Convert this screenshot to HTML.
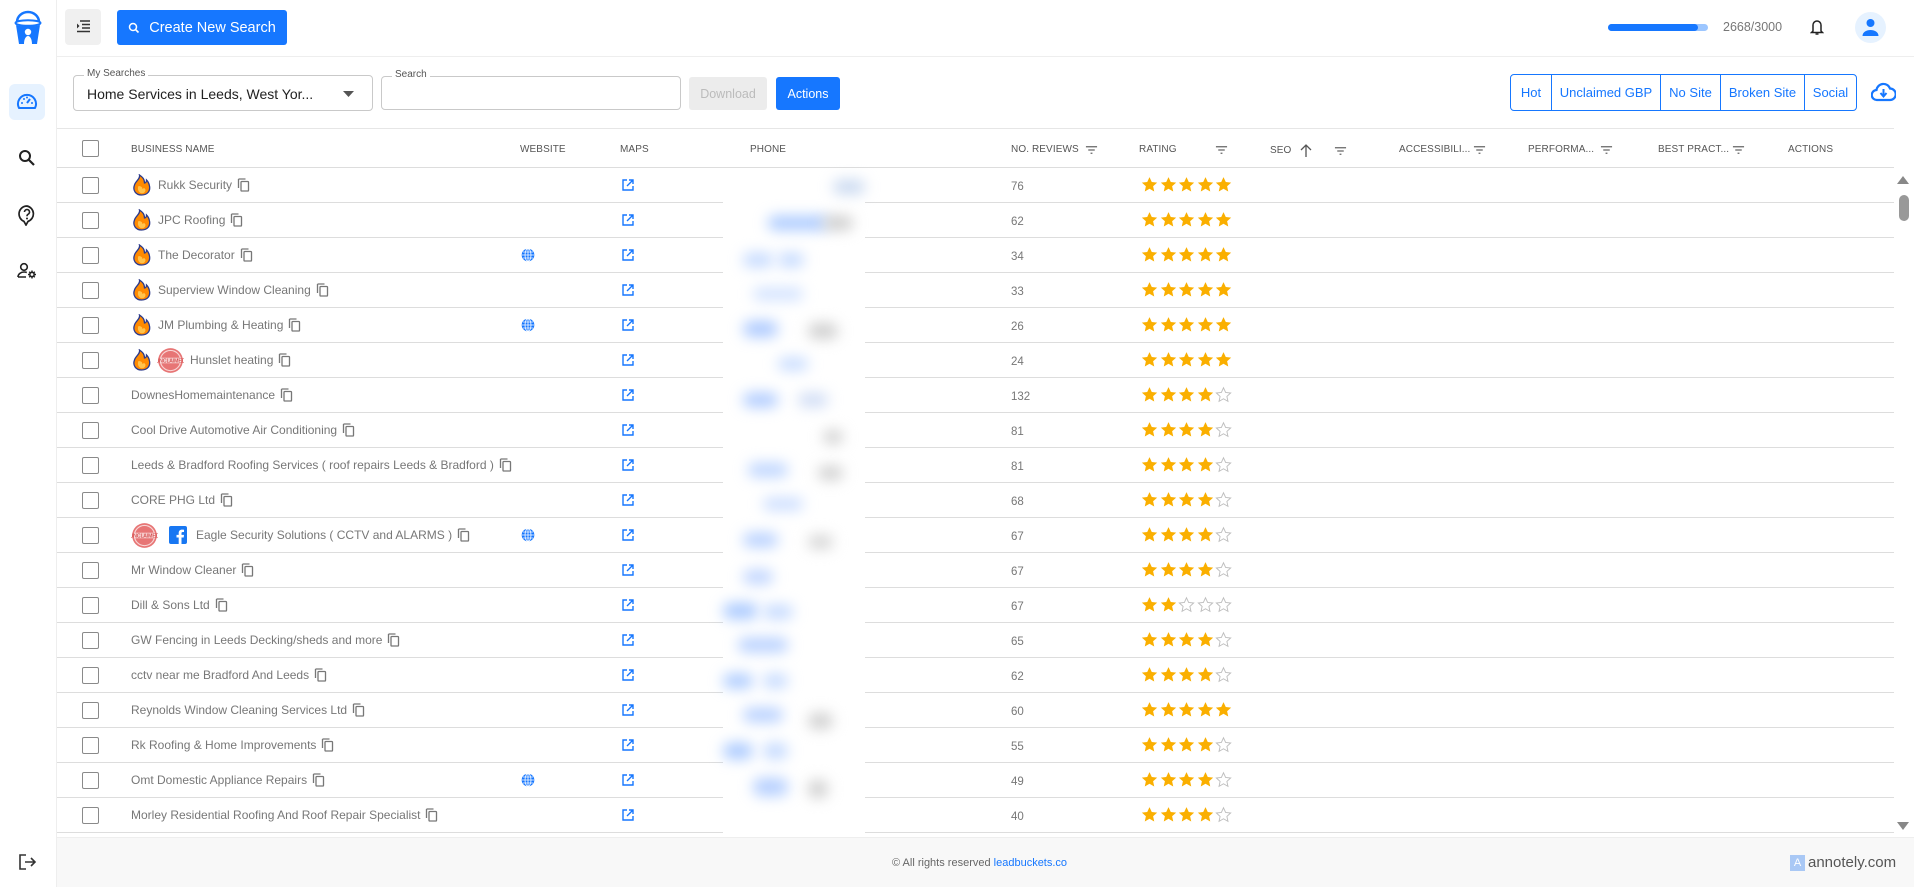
<!DOCTYPE html>
<html><head><meta charset="utf-8">
<style>
*{box-sizing:border-box;margin:0;padding:0}
body{width:1914px;height:887px;overflow:hidden;background:#fff;font-family:"Liberation Sans",sans-serif;position:relative;color:#555}
.abs{position:absolute}
.side{left:0;top:0;width:57px;height:887px;border-right:1px solid #eee;background:#fff}
.top{left:57px;top:0;right:0;height:57px;border-bottom:1px solid #eee}
.btn{background:#1677ff;color:#fff;border-radius:3px;font-size:14px;display:flex;align-items:center;justify-content:center}
.field{border:1px solid #c9c9c9;border-radius:4px;background:#fff}
.lbl{position:absolute;top:-8px;left:10px;background:#fff;padding:0 3px;font-size:10px;color:#555}
.seg{left:1510px;top:74px;width:347px;height:37px;border:1px solid #1677ff;border-radius:4px;display:flex;color:#1677ff;font-size:13px}
.seg div{display:flex;align-items:center;justify-content:center;border-right:1px solid #1677ff;height:100%}
.seg div:last-child{border:none}
.hdr{top:128px;left:57px;width:1837px;height:40px;border-top:1px solid #e6e6e6;border-bottom:1px solid #ddd}
.h{position:absolute;top:15px;font-size:10px;color:#555;text-transform:uppercase;letter-spacing:.1px;display:flex;align-items:center}
.cb{position:absolute;width:17px;height:17px;border:1.8px solid #8a8a8a;border-radius:2px;background:#fff}
.row{position:absolute;left:57px;width:1837px;height:35px;border-bottom:1px solid #ddd}
.row .cb{left:25px;top:9px}
.nm{position:absolute;left:74px;top:0;height:34px;display:flex;align-items:center;font-size:12px;color:#777;white-space:nowrap}
.nm svg{flex:none}
.num{position:absolute;left:954px;top:13px;font-size:11.5px;color:#777}
.st{position:absolute;left:1084px;top:8px;display:flex;gap:1.5px}
.mp{position:absolute;left:565px;top:11px}
.gl{position:absolute;left:464px;top:10px}
.phone{left:723px;top:168px;width:142px;height:669px;background:#fff}
.blob{position:absolute;border-radius:8px;filter:blur(7px)}
</style></head><body>
<svg width="0" height="0" style="position:absolute">
<defs>
<symbol id="fire" viewBox="0 0 20 22"><path d="M8 1C9 5 4 7 3 11c-2 5 1 10 7 10s9-4 8-9c-.5-3-2-5-3-6 0 2-1 3-2 3 0-4-2-6-5-8z" fill="#ff8a00" stroke="#2b3a8c" stroke-width="1.3"/><path d="M7 12c-1 2-1 5 2 7 3 1 5-1 5-3 0-1-1-2-2-2 0 1-1 1-1 1 0-2-2-3-4-3z" fill="#ffc34d"/></symbol>
<symbol id="copy" viewBox="0 0 14 14"><path d="M1.5 1v9M1.5 1h7" stroke="#777" stroke-width="1.3" fill="none"/><rect x="4" y="3.5" width="7.5" height="9.5" rx=".8" stroke="#777" stroke-width="1.3" fill="none"/></symbol>
<symbol id="ext" viewBox="0 0 12 12"><path d="M5 1H1v10h10V7" stroke="#1677ff" stroke-width="1.4" fill="none"/><path d="M7 1h4v4M11 1L5 7" stroke="#1677ff" stroke-width="1.4" fill="none"/></symbol>
<symbol id="globe" viewBox="0 0 14 14"><circle cx="7" cy="7" r="6.3" fill="#1677ff"/><path d="M1 7h12M7 1v12M2 4h10M2 10h10" stroke="#fff" stroke-width=".8"/><ellipse cx="7" cy="7" rx="3" ry="6.3" stroke="#fff" stroke-width=".8" fill="none"/></symbol>
<symbol id="sf" viewBox="0 0 24 24"><path d="M12 1.5l3.2 7 7.6.8-5.7 5.1 1.6 7.5L12 18l-6.7 3.9 1.6-7.5L1.2 9.3l7.6-.8z" fill="#faaf00"/></symbol>
<symbol id="se" viewBox="0 0 24 24"><path d="M12 2.5l3 6.6 7.1.8-5.3 4.8 1.5 7L12 18l-6.3 3.7 1.5-7L1.9 9.9 9 9.1z" fill="none" stroke="#bdbdbd" stroke-width="1.3"/></symbol>
<symbol id="flt" viewBox="0 0 14 10"><path d="M1 1.5h12M3.5 5h7M6 8.5h2" stroke="#666" stroke-width="1.4"/></symbol>
<symbol id="unc" viewBox="0 0 24 24"><circle cx="12" cy="12" r="11" fill="#e35d5d" opacity=".85"/><circle cx="12" cy="12" r="9" fill="none" stroke="#fff" stroke-width="1" opacity=".7"/><rect x="3" y="9.5" width="18" height="5" fill="#fff" opacity=".6"/><text x="12" y="13.6" font-size="4.5" text-anchor="middle" fill="#c33" font-family="Liberation Sans">UNCLAIMED</text></symbol>
<symbol id="fb" viewBox="0 0 18 18"><rect width="18" height="18" rx="2" fill="#1877f2"/><path d="M12.5 18v-6.5h2.2l.3-2.6h-2.5V7.3c0-.8.2-1.3 1.3-1.3H15V3.7c-.3 0-1.1-.1-2-.1-2 0-3.3 1.2-3.3 3.4v1.9H7.5v2.6h2.2V18z" fill="#fff"/></symbol>
</defs></svg>

<div class="abs side">
<svg class="abs" style="left:13px;top:10px" width="30" height="35" viewBox="0 0 30 35"><path d="M4 12a11 10 0 0 1 22 0" stroke="#1677ff" stroke-width="2.5" fill="none"/><ellipse cx="15" cy="13" rx="12.5" ry="2.8" stroke="#1677ff" stroke-width="2" fill="none"/><path d="M3 15l3 19h5c0-5 2-8 4-8s4 3 4 8h5l3-19c-4 2-20 2-24 0z" fill="#1677ff"/><circle cx="15" cy="22" r="3.2" fill="#fff"/></svg>
<div class="abs" style="left:9px;top:84px;width:36px;height:36px;background:#e6f2ff;border-radius:6px"></div>
<svg class="abs" style="left:16px;top:91px" width="22" height="22" viewBox="0 0 22 22"><path d="M3 17a9 9 0 1 1 16 0z" stroke="#1677ff" stroke-width="2" fill="none" stroke-linejoin="round"/><path d="M11 12l3-4" stroke="#1677ff" stroke-width="2"/><circle cx="6" cy="12" r="1" fill="#1677ff"/><circle cx="8" cy="8" r="1" fill="#1677ff"/><circle cx="11" cy="6.5" r="1" fill="#1677ff"/><circle cx="16" cy="12" r="1" fill="#1677ff"/></svg>
<svg class="abs" style="left:18px;top:149px" width="18" height="18" viewBox="0 0 18 18"><circle cx="7" cy="7" r="5" stroke="#222" stroke-width="2" fill="none"/><path d="M11 11l5 5" stroke="#222" stroke-width="2.2"/></svg>
<svg class="abs" style="left:17px;top:204px" width="20" height="22" viewBox="0 0 20 22"><path d="M10 2a8 8 0 0 0-3 15.4L9 21l2-3.6A8 8 0 0 0 10 2z" stroke="#222" stroke-width="1.7" fill="none"/><path d="M7.5 8a2.5 2.5 0 1 1 3.5 2.3c-1 .5-1 1-1 2" stroke="#222" stroke-width="1.6" fill="none"/><circle cx="10" cy="14.5" r="1" fill="#222"/></svg>
<svg class="abs" style="left:17px;top:262px" width="20" height="18" viewBox="0 0 20 18"><circle cx="7" cy="5" r="3.3" stroke="#222" stroke-width="1.6" fill="none"/><path d="M1 15c0-3 3-5 6-5 1 0 2 .2 2.8.5M1 15h8" stroke="#222" stroke-width="1.6" fill="none"/><circle cx="15" cy="12.5" r="2.2" stroke="#222" stroke-width="1.6" fill="none"/><path d="M15 8.5v1.5M15 15v1.5M11 12.5h1.5M17.5 12.5H19M12.2 9.7l1 1M16.8 14.3l1 1M12.2 15.3l1-1M16.8 10.7l1-1" stroke="#222" stroke-width="1.4"/></svg>
<svg class="abs" style="left:19px;top:854px" width="18" height="16" viewBox="0 0 18 16"><path d="M7 1H1v14h6" stroke="#333" stroke-width="1.6" fill="none"/><path d="M6 8h10M12 4l4 4-4 4" stroke="#333" stroke-width="1.6" fill="none"/></svg>
</div>

<div class="abs top"></div>
<div class="abs" style="left:65px;top:9px;width:36px;height:36px;background:#f0f0f0;border-radius:4px"></div>
<svg class="abs" style="left:76px;top:20px" width="14" height="13" viewBox="0 0 14 13"><path d="M4 1h10M6 4.5h8M6 8h8M1 11.5h13" stroke="#333" stroke-width="1.5"/><path d="M1 3.5l2.5 2.5L1 8.5z" fill="#333"/></svg>
<div class="abs btn" style="left:117px;top:10px;width:170px;height:35px;font-size:14.5px"><svg width="12" height="12" viewBox="0 0 12 12" style="margin-right:9px"><circle cx="5" cy="5" r="3.5" stroke="#fff" stroke-width="1.5" fill="none"/><path d="M7.5 7.5l3 3" stroke="#fff" stroke-width="1.6"/></svg>Create New Search</div>
<div class="abs" style="left:1608px;top:24px;width:100px;height:7px;background:#9cc6ff;border-radius:4px"><div style="width:90px;height:7px;background:#1677ff;border-radius:4px"></div></div>
<div class="abs" style="left:1723px;top:20px;font-size:12.5px;color:#777">2668/3000</div>
<svg class="abs" style="left:1810px;top:18px" width="14" height="18" viewBox="0 0 14 18"><path d="M3 13V7a4 4 0 0 1 8 0v6l1.5 1.5h-11z" stroke="#222" stroke-width="1.5" fill="none"/><path d="M5.5 16h3" stroke="#222" stroke-width="1.5"/></svg>
<div class="abs" style="left:1855px;top:12px;width:31px;height:31px;border-radius:50%;background:#e6f2ff"></div>
<svg class="abs" style="left:1862px;top:18px" width="17" height="18" viewBox="0 0 17 18"><circle cx="8.5" cy="5" r="4" fill="#1677ff"/><path d="M0.5 18c0-4 4-6 8-6s8 2 8 6z" fill="#1677ff"/></svg>

<div class="abs field" style="left:73px;top:75px;width:300px;height:36px"><span class="lbl">My Searches</span><span class="abs" style="left:13px;top:10px;font-size:14px;color:#222">Home Services in Leeds, West Yor...</span><svg class="abs" style="left:269px;top:15px" width="11" height="6"><path d="M0 0h11L5.5 6z" fill="#555"/></svg></div>
<div class="abs field" style="left:381px;top:76px;width:300px;height:34px"><span class="lbl">Search</span></div>
<div class="abs btn" style="left:689px;top:77px;width:78px;height:33px;background:#ececec;color:#bbb;font-size:12.5px">Download</div>
<div class="abs btn" style="left:776px;top:77px;width:64px;height:33px;font-size:12.5px">Actions</div>
<div class="abs seg"><div style="width:41px">Hot</div><div style="width:109px">Unclaimed GBP</div><div style="width:60px">No Site</div><div style="width:84px">Broken Site</div><div style="flex:1">Social</div></div>
<svg class="abs" style="left:1871px;top:82px" width="25" height="20" viewBox="0 0 25 20"><path d="M6 18a5 5 0 0 1-.5-10A7 7 0 0 1 19 6.5 5.5 5.5 0 0 1 19 18z" stroke="#1677ff" stroke-width="2.2" fill="none"/><path d="M12.5 7v7M9.5 11l3 3.5 3-3.5" stroke="#1677ff" stroke-width="2" fill="none"/></svg>

<div class="abs hdr">
<div class="cb" style="left:25px;top:11px"></div>
<div class="h" style="left:74px">Business Name</div>
<div class="h" style="left:463px">Website</div>
<div class="h" style="left:563px">Maps</div>
<div class="h" style="left:693px">Phone</div>
<div class="h" style="left:954px">No. Reviews<svg width="13" height="10" style="margin-left:6px"><use href="#flt"/></svg></div>
<div class="h" style="left:1082px">Rating<svg width="13" height="10" style="margin-left:38px"><use href="#flt"/></svg></div>
<div class="h" style="left:1213px">SEO<svg width="12" height="13" viewBox="0 0 12 13" style="margin-left:9px"><path d="M6 13V1M1 6l5-5 5 5" stroke="#555" stroke-width="1.3" fill="none"/></svg><svg width="13" height="10" style="margin-left:22px"><use href="#flt"/></svg></div>
<div class="h" style="left:1342px">Accessibili...<svg width="13" height="10" style="margin-left:3px"><use href="#flt"/></svg></div>
<div class="h" style="left:1471px">Performa...<svg width="13" height="10" style="margin-left:6px"><use href="#flt"/></svg></div>
<div class="h" style="left:1601px">Best Pract...<svg width="13" height="10" style="margin-left:3px"><use href="#flt"/></svg></div>
<div class="h" style="left:1731px">Actions</div>
</div>

<div class="row" style="top:168px"><div class="cb"></div><div class="nm"><svg width="21" height="22"><use href="#fire"/></svg><span style="margin-left:6px">Rukk Security</span><svg width="14" height="14" style="margin-left:5px"><use href="#copy"/></svg></div><svg class="mp" width="12" height="12"><use href="#ext"/></svg><div class="num">76</div><div class="st"><svg width="17" height="17"><use href="#sf"/></svg><svg width="17" height="17"><use href="#sf"/></svg><svg width="17" height="17"><use href="#sf"/></svg><svg width="17" height="17"><use href="#sf"/></svg><svg width="17" height="17"><use href="#sf"/></svg></div></div>
<div class="row" style="top:203px"><div class="cb"></div><div class="nm"><svg width="21" height="22"><use href="#fire"/></svg><span style="margin-left:6px">JPC Roofing</span><svg width="14" height="14" style="margin-left:5px"><use href="#copy"/></svg></div><svg class="mp" width="12" height="12"><use href="#ext"/></svg><div class="num">62</div><div class="st"><svg width="17" height="17"><use href="#sf"/></svg><svg width="17" height="17"><use href="#sf"/></svg><svg width="17" height="17"><use href="#sf"/></svg><svg width="17" height="17"><use href="#sf"/></svg><svg width="17" height="17"><use href="#sf"/></svg></div></div>
<div class="row" style="top:238px"><div class="cb"></div><div class="nm"><svg width="21" height="22"><use href="#fire"/></svg><span style="margin-left:6px">The Decorator</span><svg width="14" height="14" style="margin-left:5px"><use href="#copy"/></svg></div><svg class="gl" width="14" height="14"><use href="#globe"/></svg><svg class="mp" width="12" height="12"><use href="#ext"/></svg><div class="num">34</div><div class="st"><svg width="17" height="17"><use href="#sf"/></svg><svg width="17" height="17"><use href="#sf"/></svg><svg width="17" height="17"><use href="#sf"/></svg><svg width="17" height="17"><use href="#sf"/></svg><svg width="17" height="17"><use href="#sf"/></svg></div></div>
<div class="row" style="top:273px"><div class="cb"></div><div class="nm"><svg width="21" height="22"><use href="#fire"/></svg><span style="margin-left:6px">Superview Window Cleaning</span><svg width="14" height="14" style="margin-left:5px"><use href="#copy"/></svg></div><svg class="mp" width="12" height="12"><use href="#ext"/></svg><div class="num">33</div><div class="st"><svg width="17" height="17"><use href="#sf"/></svg><svg width="17" height="17"><use href="#sf"/></svg><svg width="17" height="17"><use href="#sf"/></svg><svg width="17" height="17"><use href="#sf"/></svg><svg width="17" height="17"><use href="#sf"/></svg></div></div>
<div class="row" style="top:308px"><div class="cb"></div><div class="nm"><svg width="21" height="22"><use href="#fire"/></svg><span style="margin-left:6px">JM Plumbing &amp; Heating</span><svg width="14" height="14" style="margin-left:5px"><use href="#copy"/></svg></div><svg class="gl" width="14" height="14"><use href="#globe"/></svg><svg class="mp" width="12" height="12"><use href="#ext"/></svg><div class="num">26</div><div class="st"><svg width="17" height="17"><use href="#sf"/></svg><svg width="17" height="17"><use href="#sf"/></svg><svg width="17" height="17"><use href="#sf"/></svg><svg width="17" height="17"><use href="#sf"/></svg><svg width="17" height="17"><use href="#sf"/></svg></div></div>
<div class="row" style="top:343px"><div class="cb"></div><div class="nm"><svg width="21" height="22"><use href="#fire"/></svg><svg width="27" height="27" style="margin-left:5px"><use href="#unc"/></svg><span style="margin-left:6px">Hunslet heating</span><svg width="14" height="14" style="margin-left:5px"><use href="#copy"/></svg></div><svg class="mp" width="12" height="12"><use href="#ext"/></svg><div class="num">24</div><div class="st"><svg width="17" height="17"><use href="#sf"/></svg><svg width="17" height="17"><use href="#sf"/></svg><svg width="17" height="17"><use href="#sf"/></svg><svg width="17" height="17"><use href="#sf"/></svg><svg width="17" height="17"><use href="#sf"/></svg></div></div>
<div class="row" style="top:378px"><div class="cb"></div><div class="nm"><span>DownesHomemaintenance</span><svg width="14" height="14" style="margin-left:5px"><use href="#copy"/></svg></div><svg class="mp" width="12" height="12"><use href="#ext"/></svg><div class="num">132</div><div class="st"><svg width="17" height="17"><use href="#sf"/></svg><svg width="17" height="17"><use href="#sf"/></svg><svg width="17" height="17"><use href="#sf"/></svg><svg width="17" height="17"><use href="#sf"/></svg><svg width="17" height="17"><use href="#se"/></svg></div></div>
<div class="row" style="top:413px"><div class="cb"></div><div class="nm"><span>Cool Drive Automotive Air Conditioning</span><svg width="14" height="14" style="margin-left:5px"><use href="#copy"/></svg></div><svg class="mp" width="12" height="12"><use href="#ext"/></svg><div class="num">81</div><div class="st"><svg width="17" height="17"><use href="#sf"/></svg><svg width="17" height="17"><use href="#sf"/></svg><svg width="17" height="17"><use href="#sf"/></svg><svg width="17" height="17"><use href="#sf"/></svg><svg width="17" height="17"><use href="#se"/></svg></div></div>
<div class="row" style="top:448px"><div class="cb"></div><div class="nm"><span>Leeds &amp; Bradford Roofing Services ( roof repairs Leeds &amp; Bradford )</span><svg width="14" height="14" style="margin-left:5px"><use href="#copy"/></svg></div><svg class="mp" width="12" height="12"><use href="#ext"/></svg><div class="num">81</div><div class="st"><svg width="17" height="17"><use href="#sf"/></svg><svg width="17" height="17"><use href="#sf"/></svg><svg width="17" height="17"><use href="#sf"/></svg><svg width="17" height="17"><use href="#sf"/></svg><svg width="17" height="17"><use href="#se"/></svg></div></div>
<div class="row" style="top:483px"><div class="cb"></div><div class="nm"><span>CORE PHG Ltd</span><svg width="14" height="14" style="margin-left:5px"><use href="#copy"/></svg></div><svg class="mp" width="12" height="12"><use href="#ext"/></svg><div class="num">68</div><div class="st"><svg width="17" height="17"><use href="#sf"/></svg><svg width="17" height="17"><use href="#sf"/></svg><svg width="17" height="17"><use href="#sf"/></svg><svg width="17" height="17"><use href="#sf"/></svg><svg width="17" height="17"><use href="#se"/></svg></div></div>
<div class="row" style="top:518px"><div class="cb"></div><div class="nm"><svg width="27" height="27"><use href="#unc"/></svg><svg width="18" height="18" style="margin-left:11px"><use href="#fb"/></svg><span style="margin-left:9px">Eagle Security Solutions ( CCTV and ALARMS )</span><svg width="14" height="14" style="margin-left:5px"><use href="#copy"/></svg></div><svg class="gl" width="14" height="14"><use href="#globe"/></svg><svg class="mp" width="12" height="12"><use href="#ext"/></svg><div class="num">67</div><div class="st"><svg width="17" height="17"><use href="#sf"/></svg><svg width="17" height="17"><use href="#sf"/></svg><svg width="17" height="17"><use href="#sf"/></svg><svg width="17" height="17"><use href="#sf"/></svg><svg width="17" height="17"><use href="#se"/></svg></div></div>
<div class="row" style="top:553px"><div class="cb"></div><div class="nm"><span>Mr Window Cleaner</span><svg width="14" height="14" style="margin-left:5px"><use href="#copy"/></svg></div><svg class="mp" width="12" height="12"><use href="#ext"/></svg><div class="num">67</div><div class="st"><svg width="17" height="17"><use href="#sf"/></svg><svg width="17" height="17"><use href="#sf"/></svg><svg width="17" height="17"><use href="#sf"/></svg><svg width="17" height="17"><use href="#sf"/></svg><svg width="17" height="17"><use href="#se"/></svg></div></div>
<div class="row" style="top:588px"><div class="cb"></div><div class="nm"><span>Dill &amp; Sons Ltd</span><svg width="14" height="14" style="margin-left:5px"><use href="#copy"/></svg></div><svg class="mp" width="12" height="12"><use href="#ext"/></svg><div class="num">67</div><div class="st"><svg width="17" height="17"><use href="#sf"/></svg><svg width="17" height="17"><use href="#sf"/></svg><svg width="17" height="17"><use href="#se"/></svg><svg width="17" height="17"><use href="#se"/></svg><svg width="17" height="17"><use href="#se"/></svg></div></div>
<div class="row" style="top:623px"><div class="cb"></div><div class="nm"><span>GW Fencing in Leeds Decking/sheds and more</span><svg width="14" height="14" style="margin-left:5px"><use href="#copy"/></svg></div><svg class="mp" width="12" height="12"><use href="#ext"/></svg><div class="num">65</div><div class="st"><svg width="17" height="17"><use href="#sf"/></svg><svg width="17" height="17"><use href="#sf"/></svg><svg width="17" height="17"><use href="#sf"/></svg><svg width="17" height="17"><use href="#sf"/></svg><svg width="17" height="17"><use href="#se"/></svg></div></div>
<div class="row" style="top:658px"><div class="cb"></div><div class="nm"><span>cctv near me Bradford And Leeds</span><svg width="14" height="14" style="margin-left:5px"><use href="#copy"/></svg></div><svg class="mp" width="12" height="12"><use href="#ext"/></svg><div class="num">62</div><div class="st"><svg width="17" height="17"><use href="#sf"/></svg><svg width="17" height="17"><use href="#sf"/></svg><svg width="17" height="17"><use href="#sf"/></svg><svg width="17" height="17"><use href="#sf"/></svg><svg width="17" height="17"><use href="#se"/></svg></div></div>
<div class="row" style="top:693px"><div class="cb"></div><div class="nm"><span>Reynolds Window Cleaning Services Ltd</span><svg width="14" height="14" style="margin-left:5px"><use href="#copy"/></svg></div><svg class="mp" width="12" height="12"><use href="#ext"/></svg><div class="num">60</div><div class="st"><svg width="17" height="17"><use href="#sf"/></svg><svg width="17" height="17"><use href="#sf"/></svg><svg width="17" height="17"><use href="#sf"/></svg><svg width="17" height="17"><use href="#sf"/></svg><svg width="17" height="17"><use href="#sf"/></svg></div></div>
<div class="row" style="top:728px"><div class="cb"></div><div class="nm"><span>Rk Roofing &amp; Home Improvements</span><svg width="14" height="14" style="margin-left:5px"><use href="#copy"/></svg></div><svg class="mp" width="12" height="12"><use href="#ext"/></svg><div class="num">55</div><div class="st"><svg width="17" height="17"><use href="#sf"/></svg><svg width="17" height="17"><use href="#sf"/></svg><svg width="17" height="17"><use href="#sf"/></svg><svg width="17" height="17"><use href="#sf"/></svg><svg width="17" height="17"><use href="#se"/></svg></div></div>
<div class="row" style="top:763px"><div class="cb"></div><div class="nm"><span>Omt Domestic Appliance Repairs</span><svg width="14" height="14" style="margin-left:5px"><use href="#copy"/></svg></div><svg class="gl" width="14" height="14"><use href="#globe"/></svg><svg class="mp" width="12" height="12"><use href="#ext"/></svg><div class="num">49</div><div class="st"><svg width="17" height="17"><use href="#sf"/></svg><svg width="17" height="17"><use href="#sf"/></svg><svg width="17" height="17"><use href="#sf"/></svg><svg width="17" height="17"><use href="#sf"/></svg><svg width="17" height="17"><use href="#se"/></svg></div></div>
<div class="row" style="top:798px"><div class="cb"></div><div class="nm"><span>Morley Residential Roofing And Roof Repair Specialist</span><svg width="14" height="14" style="margin-left:5px"><use href="#copy"/></svg></div><svg class="mp" width="12" height="12"><use href="#ext"/></svg><div class="num">40</div><div class="st"><svg width="17" height="17"><use href="#sf"/></svg><svg width="17" height="17"><use href="#sf"/></svg><svg width="17" height="17"><use href="#sf"/></svg><svg width="17" height="17"><use href="#sf"/></svg><svg width="17" height="17"><use href="#se"/></svg></div></div>

<div class="abs phone">
<div class="blob" style="left:110px;top:12px;width:32px;height:14px;background:#c8d8f0"></div>
<div class="blob" style="left:45px;top:48px;width:60px;height:14px;background:#a9c9ff"></div>
<div class="blob" style="left:100px;top:48px;width:30px;height:14px;background:#ccc"></div>
<div class="blob" style="left:20px;top:85px;width:30px;height:14px;background:#c3d9ff"></div>
<div class="blob" style="left:55px;top:85px;width:26px;height:14px;background:#c3d9ff"></div>
<div class="blob" style="left:30px;top:120px;width:50px;height:12px;background:#cfe0ff"></div>
<div class="blob" style="left:20px;top:153px;width:35px;height:16px;background:#acc9ff"></div>
<div class="blob" style="left:85px;top:155px;width:30px;height:16px;background:#cfcfcf"></div>
<div class="blob" style="left:55px;top:190px;width:30px;height:12px;background:#c3d9ff"></div>
<div class="blob" style="left:20px;top:225px;width:35px;height:14px;background:#acc9ff"></div>
<div class="blob" style="left:75px;top:225px;width:30px;height:14px;background:#cfdcf5"></div>
<div class="blob" style="left:100px;top:262px;width:20px;height:14px;background:#d0d0d0"></div>
<div class="blob" style="left:25px;top:295px;width:40px;height:14px;background:#bcd4ff"></div>
<div class="blob" style="left:95px;top:298px;width:25px;height:14px;background:#cfcfcf"></div>
<div class="blob" style="left:40px;top:330px;width:40px;height:12px;background:#c8dbff"></div>
<div class="blob" style="left:20px;top:365px;width:35px;height:14px;background:#b5cfff"></div>
<div class="blob" style="left:85px;top:367px;width:25px;height:14px;background:#d5d5d5"></div>
<div class="blob" style="left:20px;top:402px;width:30px;height:14px;background:#bdd3ff"></div>
<div class="blob" style="left:0px;top:435px;width:35px;height:16px;background:#a9c9ff"></div>
<div class="blob" style="left:40px;top:437px;width:30px;height:14px;background:#c3d9ff"></div>
<div class="blob" style="left:15px;top:470px;width:50px;height:14px;background:#b5cfff"></div>
<div class="blob" style="left:0px;top:506px;width:30px;height:14px;background:#a9c9ff"></div>
<div class="blob" style="left:40px;top:506px;width:25px;height:14px;background:#c3d9ff"></div>
<div class="blob" style="left:20px;top:540px;width:40px;height:14px;background:#b5cfff"></div>
<div class="blob" style="left:85px;top:545px;width:25px;height:16px;background:#cfcfcf"></div>
<div class="blob" style="left:0px;top:575px;width:30px;height:16px;background:#a9c9ff"></div>
<div class="blob" style="left:40px;top:575px;width:25px;height:16px;background:#c3d9ff"></div>
<div class="blob" style="left:30px;top:610px;width:35px;height:18px;background:#b5cfff"></div>
<div class="blob" style="left:85px;top:612px;width:20px;height:18px;background:#cfcfcf"></div>
</div>

<svg class="abs" style="left:1897px;top:176px" width="12" height="8"><path d="M0 8L6 0l6 8z" fill="#888"/></svg>
<div class="abs" style="left:1899px;top:195px;width:10px;height:26px;background:#999;border-radius:5px"></div>
<svg class="abs" style="left:1897px;top:822px" width="12" height="8"><path d="M0 0h12L6 8z" fill="#888"/></svg>

<div class="abs" style="left:57px;top:837px;width:1857px;height:50px;background:#f8f8f8;border-top:1px solid #eee"></div>
<div class="abs" style="left:892px;top:857px;font-size:11px;color:#666">© All rights reserved <span style="color:#1677ff">leadbuckets.co</span></div>
<div class="abs" style="left:1790px;top:854px;display:flex;align-items:center;font-size:15px;color:#555"><span style="display:inline-block;width:15px;height:16px;background:#a9c8f5;color:#fff;font-size:11px;text-align:center;line-height:16px;margin-right:3px">A</span>annotely.com</div>
</body></html>
